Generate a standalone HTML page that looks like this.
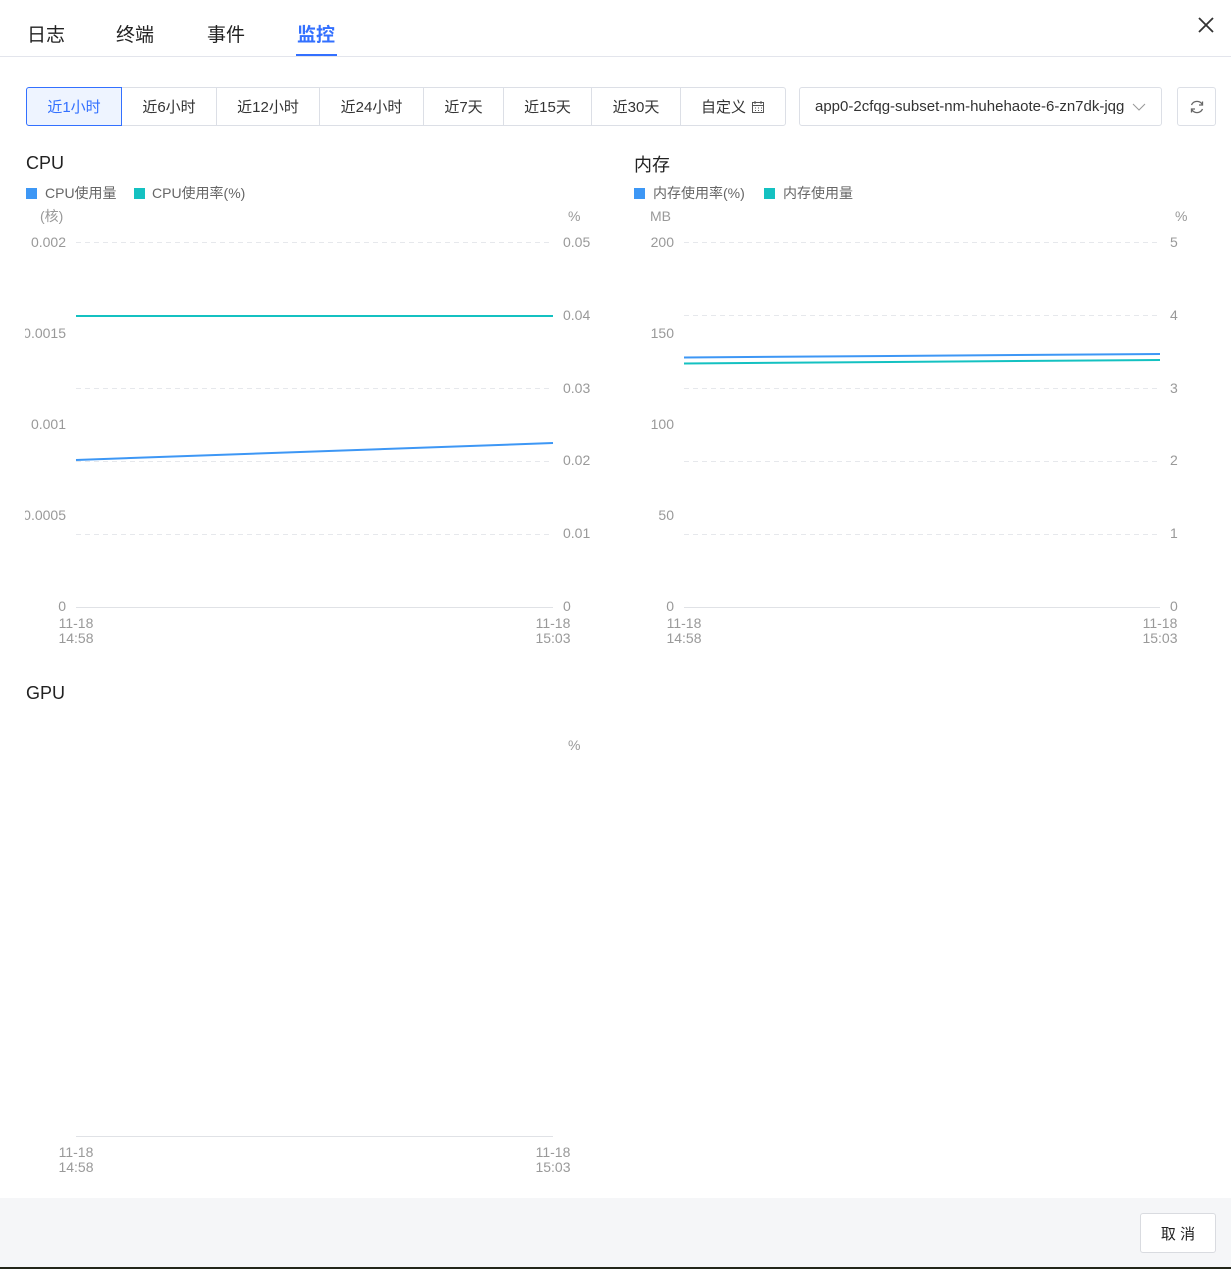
<!DOCTYPE html>
<html><head><meta charset="utf-8">
<style>
*{margin:0;padding:0;box-sizing:border-box}
body{width:1231px;height:1269px;background:#fff;font-family:"Liberation Sans","Noto Sans CJK SC",sans-serif;position:relative;overflow:hidden;color:#333}
.a{position:absolute}
.tab{position:absolute;top:20px;font-size:19px;color:#222}
.seg{position:absolute;top:87px;height:39px;border:1px solid #dcdfe6;font-size:15px;color:#333;display:flex;align-items:center;justify-content:center;background:#fff}
svg text{font-family:"Liberation Sans","Noto Sans CJK SC",sans-serif}
</style></head><body>
<div class="tab" style="left:27px">日志</div>
<div class="tab" style="left:116px">终端</div>
<div class="tab" style="left:207px">事件</div>
<div class="tab" style="left:297px;color:#3370ff;font-weight:bold">监控</div>
<div class="a" style="left:296px;top:54px;width:41px;height:3px;background:#3370ff"></div>
<div class="a" style="left:0;top:56px;width:1231px;height:1px;background:#e3e5ec"></div>
<svg class="a" style="left:1197px;top:16px" width="18" height="18"><path d="M2 2L16 16M16 2L2 16" stroke="#333" stroke-width="1.8"/></svg>

<div class="seg" style="left:26px;width:96px;background:#eef4ff;border-color:#3370ff;color:#3370ff;border-radius:3px 0 0 3px;z-index:2">近1小时</div>
<div class="seg" style="left:121px;width:96px">近6小时</div>
<div class="seg" style="left:216px;width:104px">近12小时</div>
<div class="seg" style="left:319px;width:105px">近24小时</div>
<div class="seg" style="left:423px;width:81px">近7天</div>
<div class="seg" style="left:503px;width:89px">近15天</div>
<div class="seg" style="left:591px;width:90px">近30天</div>
<div class="seg" style="left:680px;width:106px;border-radius:0 3px 3px 0">自定义 <svg width="14" height="14" style="margin-left:5px"><rect x="1.5" y="2.5" width="11" height="10" fill="none" stroke="#555"/><path d="M1.5 5.5h11M4 8h1M7 8h1M10 8h1M4 10.5h1M7 10.5h1M10 10.5h1M4 1v3M10 1v3" stroke="#555"/></svg></div>
<div class="seg" style="left:799px;width:363px;border-radius:3px;justify-content:flex-start;padding-left:15px">app0-2cfqg-subset-nm-huhehaote-6-zn7dk-jqg<svg width="14" height="10" style="margin-left:8px"><path d="M1 2l6 6 6-6" fill="none" stroke="#999" stroke-width="1"/></svg></div>
<div class="seg" style="left:1177px;width:39px;border-radius:3px"><svg width="16" height="16"><path d="M13.5 6A6 6 0 0 0 2.5 6M2.5 10a6 6 0 0 0 11 0" fill="none" stroke="#666" stroke-width="1.3"/><path d="M13.5 2.5V6h-3.5M2.5 13.5V10h3.5" fill="none" stroke="#666" stroke-width="1.3"/></svg></div>

<div class="a" style="left:26px;top:153px;font-size:18px;color:#222">CPU</div>
<div class="a" style="left:634px;top:151px;font-size:18px;color:#222">内存</div>
<div class="a" style="left:26px;top:683px;font-size:18px;color:#222">GPU</div>

<svg class="a" style="left:0;top:0" width="1231" height="1198" font-size="14" fill="#999">
<rect x="26" y="188" width="11" height="11" fill="#3d97f5"/><text x="45" y="198" fill="#666">CPU使用量</text>
<rect x="134" y="188" width="11" height="11" fill="#14c1c1"/><text x="152" y="198" fill="#666">CPU使用率(%)</text>
<text x="40" y="221">(核)</text><text x="568" y="221">%</text>
<g stroke="#e6e8ec" stroke-dasharray="5,4">
<line x1="76" y1="242.5" x2="553" y2="242.5"/><line x1="76" y1="315.5" x2="553" y2="315.5"/><line x1="76" y1="388.5" x2="553" y2="388.5"/><line x1="76" y1="461.5" x2="553" y2="461.5"/><line x1="76" y1="534.5" x2="553" y2="534.5"/>
<line x1="684" y1="242.5" x2="1160" y2="242.5"/><line x1="684" y1="315.5" x2="1160" y2="315.5"/><line x1="684" y1="388.5" x2="1160" y2="388.5"/><line x1="684" y1="461.5" x2="1160" y2="461.5"/><line x1="684" y1="534.5" x2="1160" y2="534.5"/>
</g>
<g stroke="#e0e2e6"><line x1="76" y1="607.5" x2="553" y2="607.5"/><line x1="684" y1="607.5" x2="1160" y2="607.5"/><line x1="76" y1="1136.5" x2="553" y2="1136.5"/></g>
<g text-anchor="end">
<text x="66" y="247">0.002</text><text x="66" y="338">0.0015</text><text x="66" y="429">0.001</text><text x="66" y="520">0.0005</text><text x="66" y="611">0</text>
<text x="674" y="247">200</text><text x="674" y="338">150</text><text x="674" y="429">100</text><text x="674" y="520">50</text><text x="674" y="611">0</text>
</g>
<rect x="0" y="320" width="25" height="210" fill="#fff"/>
<text x="563" y="247">0.05</text><text x="563" y="320">0.04</text><text x="563" y="393">0.03</text><text x="563" y="465">0.02</text><text x="563" y="538">0.01</text><text x="563" y="611">0</text>
<text x="1170" y="247">5</text><text x="1170" y="320">4</text><text x="1170" y="393">3</text><text x="1170" y="465">2</text><text x="1170" y="538">1</text><text x="1170" y="611">0</text>
<line x1="76" y1="316" x2="553" y2="316" stroke="#14c1c1" stroke-width="2"/>
<line x1="76" y1="460" x2="553" y2="443" stroke="#3d97f5" stroke-width="2"/>
<line x1="684" y1="357.5" x2="1160" y2="354" stroke="#3d97f5" stroke-width="2"/>
<line x1="684" y1="363.5" x2="1160" y2="360" stroke="#14c1c1" stroke-width="2"/>
<g text-anchor="middle">
<text x="76" y="628">11-18</text><text x="76" y="643">14:58</text><text x="553" y="628">11-18</text><text x="553" y="643">15:03</text>
<text x="684" y="628">11-18</text><text x="684" y="643">14:58</text><text x="1160" y="628">11-18</text><text x="1160" y="643">15:03</text>
<text x="76" y="1157">11-18</text><text x="76" y="1172">14:58</text><text x="553" y="1157">11-18</text><text x="553" y="1172">15:03</text>
</g>
<rect x="634" y="188" width="11" height="11" fill="#3d97f5"/><text x="653" y="198" fill="#666">内存使用率(%)</text>
<rect x="764" y="188" width="11" height="11" fill="#14c1c1"/><text x="783" y="198" fill="#666">内存使用量</text>
<text x="650" y="221">MB</text><text x="1175" y="221">%</text>
<text x="568" y="750">%</text>
</svg>

<div class="a" style="left:0;top:1198px;width:1231px;height:69px;background:#f5f6f8"></div>
<div class="a" style="left:1140px;top:1213px;width:76px;height:40px;border:1px solid #d9dbe0;border-radius:3px;background:#fff;font-size:15px;color:#222;display:flex;align-items:center;justify-content:center">取 消</div>
<div class="a" style="left:0;top:1267px;width:1231px;height:2px;background:#22261a"></div>
</body></html>
